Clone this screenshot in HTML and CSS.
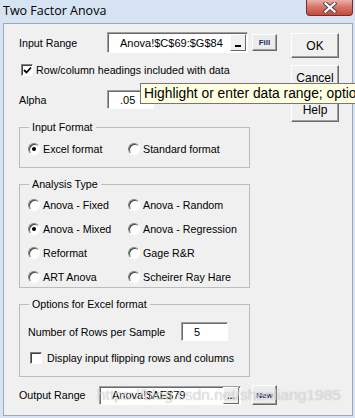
FILE: index.html
```html
<!DOCTYPE html>
<html lang="en">
<head>
    <meta charset="UTF-8">
    <meta name="viewport" content="width=device-width, initial-scale=1.0">
    <title>Two Factor Anova</title>
    <link rel="stylesheet" href="styles.css">
</head>
<body>

<div class="window">
    <div class="titlebar">
        <span class="title">Two Factor Anova</span>
        <div class="close-btn">
            <svg width="14" height="11" viewBox="0 0 14 11">
                <path d="M2.5 1.5 L11.5 9.5 M11.5 1.5 L2.5 9.5" stroke="#4a4a4a" stroke-width="4" stroke-linecap="square"/>
                <path d="M2.5 1.5 L11.5 9.5 M11.5 1.5 L2.5 9.5" stroke="#ffffff" stroke-width="2.2" stroke-linecap="square"/>
            </svg>
        </div>
    </div>

    <div class="client">
        <div class="main">
            <div class="row input-row">
                <span class="label">Input Range</span>
                <div class="textbox range-box">
                    <span class="value">Anova!$C$69:$G$84</span>
                    <span class="mini-btn underscore"></span>
                </div>
                <span class="small-btn">Fill</span>
            </div>

            <div class="check-row">
                <span class="checkbox">
                    <svg width="9" height="9" viewBox="0 0 9 9"><path d="M1 4 L3.5 6.5 L8 1.5" fill="none" stroke="#000" stroke-width="1.8"/></svg>
                </span>
                Row/column headings included with data
            </div>

            <div class="row alpha-row">
                <span class="label">Alpha</span>
                <div class="textbox alpha-box">.05</div>
            </div>

            <fieldset class="group group-format">
                <legend>Input Format</legend>
                <div class="radio-grid">
                    <span class="opt"><span class="radio checked"></span>Excel format</span>
                    <span class="opt"><span class="radio"></span>Standard format</span>
                </div>
            </fieldset>

            <fieldset class="group group-type">
                <legend>Analysis Type</legend>
                <div class="radio-grid">
                    <span class="opt"><span class="radio"></span>Anova - Fixed</span>
                    <span class="opt"><span class="radio"></span>Anova - Random</span>
                    <span class="opt"><span class="radio checked"></span>Anova - Mixed</span>
                    <span class="opt"><span class="radio"></span>Anova - Regression</span>
                    <span class="opt"><span class="radio"></span>Reformat</span>
                    <span class="opt"><span class="radio"></span>Gage R&amp;R</span>
                    <span class="opt"><span class="radio"></span>ART Anova</span>
                    <span class="opt"><span class="radio"></span>Scheirer Ray Hare</span>
                </div>
            </fieldset>

            <fieldset class="group group-options">
                <legend>Options for Excel format</legend>
                <div class="num-row">
                    <span class="num-label">Number of Rows per Sample</span>
                    <div class="textbox num-box">5</div>
                </div>
                <div class="check-row flip-row">
                    <span class="checkbox"></span>
                    Display input flipping rows and columns
                </div>
            </fieldset>

            <div class="row output-row">
                <span class="label out-label">Output Range</span>
                <div class="textbox out-box">
                    <span class="value">Anova!$AE$79</span>
                    <span class="mini-btn dots">...</span>
                </div>
                <span class="small-btn new-btn">New</span>
            </div>
        </div>

        <div class="buttons">
            <div class="btn">OK</div>
            <div class="btn">Cancel</div>
            <div class="btn">Help</div>
        </div>
    </div>

    <div class="tooltip">Highlight or enter data range; optionally include headings</div>
    <div class="watermark">https://blog.csdn.net/shenliang1985</div>
</div>

</body>
</html>
```

FILE: styles.css
```css
* {
    box-sizing: border-box;
}

body {
    margin: 0;
    background: #d5e3f2;
    font-family: "Liberation Sans", Arial, sans-serif;
    font-size: 10.7px;
    color: #000000;
}

.window {
    position: relative;
    width: 355px;
    height: 418px;
    overflow: hidden;
    background: #d5e3f2;
}

.titlebar {
    height: 23px;
    display: flex;
    justify-content: space-between;
    align-items: flex-start;
}

.title {
    font-family: "Open Sans", sans-serif;
    font-size: 12.5px;
    line-height: 16px;
    padding: 3px 0 0 3px;
    color: #000000;
}

.close-btn {
    width: 47px;
    height: 16px;
    margin-right: 2px;
    border: 1px solid #7a2b24;
    border-top: none;
    border-radius: 0 0 4px 4px;
    background: linear-gradient(#e9b2aa, #d7766b 45%, #c44b3e);
    display: flex;
    align-items: center;
    justify-content: center;
}

.client {
    margin: 0 2px 0 3px;
    height: 393px;
    border: 1px solid #9ba9ba;
    background: #f0f0f0;
    display: flex;
    padding: 8px 0 0 15px;
}

.main {
    width: 258px;
    display: flex;
    flex-direction: column;
}

.buttons {
    margin-left: 14px;
    width: 48px;
    padding-top: 1px;
    display: flex;
    flex-direction: column;
    gap: 7px;
}

.btn {
    height: 25px;
    display: flex;
    align-items: center;
    justify-content: center;
    background: #f0f0f0;
    border: 1px solid;
    border-color: #ffffff #696969 #696969 #ffffff;
    box-shadow: inset -1px -1px 0 #a0a0a0;
    font-size: 12px;
}

.row {
    display: flex;
    align-items: center;
}

.label {
    width: 88px;
}

.textbox {
    background: #ffffff;
    border: 1px solid;
    border-color: #a0a0a0 #ffffff #ffffff #a0a0a0;
    box-shadow: inset 1px 1px 0 #696969;
    display: flex;
    align-items: center;
    padding-left: 12px;
    font-size: 11px;
}

.input-row {
    height: 21px;
}

.range-box {
    width: 141px;
    height: 21px;
}

.value {
    flex: 1;
}

.mini-btn {
    width: 16px;
    height: 17px;
    margin-right: 1px;
    background: #f0f0f0;
    border: 1px solid;
    border-color: #ffffff #696969 #696969 #ffffff;
    display: flex;
    align-items: flex-end;
    justify-content: center;
}

.underscore::after {
    content: "";
    width: 6px;
    height: 2px;
    margin-bottom: 3px;
    background: #000000;
}

.dots {
    font-weight: bold;
    font-size: 9px;
    line-height: 10px;
    padding-bottom: 2px;
}

.small-btn {
    width: 25px;
    height: 17px;
    margin-left: 4px;
    background: #ececec;
    border: 1px solid;
    border-color: #ffffff #696969 #696969 #ffffff;
    box-shadow: inset -1px -1px 0 #a0a0a0;
    display: flex;
    align-items: center;
    justify-content: center;
    font-size: 8px;
    font-weight: bold;
    color: #1d2d62;
}

.check-row {
    margin-top: 10px;
    height: 13px;
    display: flex;
    align-items: center;
    gap: 3px;
    padding-left: 2px;
}

.checkbox {
    width: 12px;
    height: 12px;
    background: #ffffff;
    border: 1px solid;
    border-color: #808080 #ffffff #ffffff #808080;
    box-shadow: inset 1px 1px 0 #404040;
    display: flex;
    align-items: center;
    justify-content: center;
    padding: 1px 0 0 1px;
}

.alpha-row {
    margin-top: 14px;
    height: 19px;
}

.alpha-box {
    width: 47px;
    height: 19px;
}

.group {
    margin: 0;
    min-width: 0;
    width: 231px;
    border: 1px solid #bcbcbc;
    padding: 0 8px;
}

.group legend {
    padding: 0 3px;
    margin-left: 1px;
    line-height: 14px;
}

.group-format {
    margin-top: 11px;
    padding-top: 8px;
    padding-bottom: 11px;
}

.group-type {
    margin-top: 9px;
    padding-top: 7px;
    padding-bottom: 3px;
}

.group-options {
    margin-top: 9px;
    padding-top: 11px;
    padding-bottom: 12px;
}

.radio-grid {
    display: grid;
    grid-template-columns: 100px auto;
    row-gap: 10px;
}

.opt {
    height: 14px;
    display: flex;
    align-items: center;
    gap: 3px;
}

.radio {
    position: relative;
    width: 12px;
    height: 12px;
    border-radius: 50%;
    background: #ffffff;
    border: 1px solid;
    border-color: #808080 #ffffff #ffffff #808080;
    box-shadow: inset 1px 1px 0 #404040;
}

.radio.checked::after {
    content: "";
    position: absolute;
    left: 3px;
    top: 3px;
    width: 4px;
    height: 4px;
    border-radius: 50%;
    background: #000000;
}

.num-row {
    height: 19px;
    display: flex;
    align-items: center;
}

.num-label {
    width: 153px;
}

.num-box {
    width: 47px;
    height: 19px;
}

.flip-row {
    gap: 5px;
}

.output-row {
    margin-top: 8px;
    height: 20px;
}

.out-label {
    width: 80px;
}

.out-box {
    width: 142px;
    height: 19px;
}

.new-btn {
    height: 20px;
    margin-left: 11px;
}

.tooltip {
    position: absolute;
    left: 140px;
    top: 83px;
    height: 21px;
    padding: 0 3px;
    background: #ffffe1;
    border: 1px solid #767676;
    white-space: nowrap;
    font-size: 13.8px;
    line-height: 19px;
}

.watermark {
    position: absolute;
    left: 97px;
    top: 386px;
    font-size: 15.5px;
    line-height: 18px;
    white-space: nowrap;
    color: rgba(255, 255, 255, 0.55);
    text-shadow: 0 0 1px rgba(90, 90, 90, 0.45);
}
```
